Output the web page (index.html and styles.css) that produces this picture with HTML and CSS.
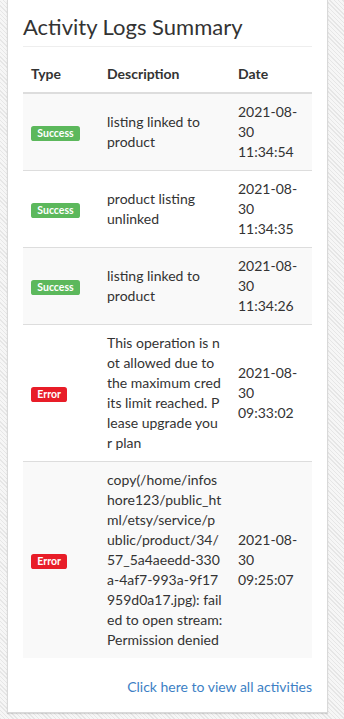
FILE: index.html
```html
<!DOCTYPE html>
<html lang="en">
<head>
  <meta charset="UTF-8" />
  <meta name="viewport" content="width=device-width, initial-scale=1.0"/>
  <title>Activity Logs Summary</title>
  <link rel="stylesheet" href="styles.css">
</head>
<body>

  <div class="panel">
    <h3 class="panel-title">Activity Logs Summary</h3>

    <table class="logs">
      <colgroup>
        <col class="col-type" />
        <col class="col-desc" />
        <col class="col-date" />
      </colgroup>
      <thead>
        <tr>
          <th>Type</th>
          <th>Description</th>
          <th>Date</th>
        </tr>
      </thead>
      <tbody>
        <tr>
          <td><span class="label label-success">Success</span></td>
          <td>listing linked to product</td>
          <td class="date">2021-08-30 11:34:54</td>
        </tr>
        <tr>
          <td><span class="label label-success">Success</span></td>
          <td>product listing unlinked</td>
          <td class="date">2021-08-30 11:34:35</td>
        </tr>
        <tr>
          <td><span class="label label-success">Success</span></td>
          <td>listing linked to product</td>
          <td class="date">2021-08-30 11:34:26</td>
        </tr>
        <tr>
          <td><span class="label label-error">Error</span></td>
          <td class="msg">This operation is not allowed due to the maximum credits limit reached. Please upgrade your plan</td>
          <td class="date">2021-08-30 09:33:02</td>
        </tr>
        <tr>
          <td><span class="label label-error">Error</span></td>
          <td class="msg-path">copy(/home/infos<br>hore123/public_ht<br>ml/etsy/service/p<br>ublic/product/34/<br>57_5a4aeedd-330<br>a-4af7-993a-9f17<br>959d0a17.jpg): fail<br>ed to open stream:<br>Permission denied</td>
          <td class="date">2021-08-30 09:25:07</td>
        </tr>
      </tbody>
    </table>

    <div class="more">
      <a href="#">Click here to view all activities</a>
    </div>
  </div>

</body>
</html>
```

FILE: styles.css
```css
body {
  margin: 0;
  padding: 0 16px 6px 7px;
  font-family: 'Lato', 'Noto Sans', sans-serif;
  font-size: 14px;
  line-height: 20px;
  color: #333;
  background: repeating-linear-gradient(45deg, #e6e6e6 0 1px, #f6f6f6 1px 3px);
}

.panel {
  background-color: #fff;
  border: 1px solid #d9d9d9;
  border-top: none;
  box-shadow: 0 1px 1px rgba(0, 0, 0, 0.12);
  padding: 14px 15px 15px;
}

.panel-title {
  margin: 0;
  font-size: 22px;
  font-weight: 400;
  line-height: 26px;
  padding-bottom: 6px;
  border-bottom: 1px solid #eee;
}

.logs {
  width: 100%;
  margin-top: 9px;
  border-collapse: collapse;
  table-layout: fixed;
}

.col-type { width: 76px; }
.col-desc { width: 131px; }
.col-date { width: 82px; }

.logs th,
.logs td {
  padding: 8px;
  text-align: left;
  vertical-align: middle;
}

.logs th {
  font-weight: 700;
  vertical-align: bottom;
  border-bottom: 2px solid #ddd;
}

.logs td {
  border-top: 1px solid #ddd;
}

.logs tbody tr:nth-child(odd) {
  background-color: #f9f9f9;
}

.logs tbody tr:first-child td {
  border-top: none;
}

.msg {
  word-break: break-all;
}

.msg-path {
  white-space: nowrap;
}

.label {
  display: inline-block;
  padding: 0.2em 0.6em 0.3em;
  font-size: 75%;
  font-weight: 700;
  line-height: 1;
  color: #fff;
  border-radius: 0.25em;
  vertical-align: middle;
}

.label-success {
  background-color: #5cb85c;
}

.label-error {
  background-color: #e81d28;
}

.more {
  margin-top: 19px;
  text-align: right;
}

.more a {
  color: #3d7fc5;
  text-decoration: none;
}
```
